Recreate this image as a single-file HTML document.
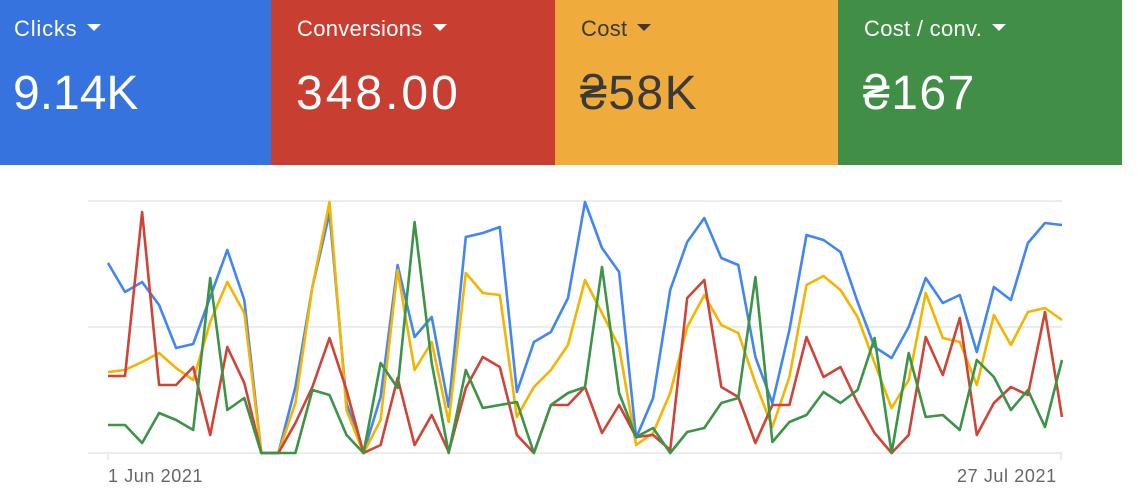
<!DOCTYPE html>
<html><head><meta charset="utf-8"><style>
body{margin:0;width:1143px;height:500px;background:#fff;overflow:hidden;font-family:"Liberation Sans",Arial,sans-serif;position:relative}
.t{position:absolute;top:0;height:165px;color:#fff}
.l{position:absolute;left:26px;top:16px;font-size:22px;letter-spacing:0.3px;white-space:nowrap}
.l:after{content:"";display:inline-block;margin-left:10px;border-left:7px solid transparent;border-right:7px solid transparent;border-top:7px solid currentColor;vertical-align:5px}
.v{position:absolute;left:25px;top:66px;font-size:48px;letter-spacing:1.5px;white-space:nowrap}
.ax{position:absolute;top:466px;font-size:18px;color:#666;letter-spacing:0.6px}
</style></head><body>
<div class="t" style="left:0;width:271px;background:#3773df"><div class="l" style="left:14px;letter-spacing:0.8px">Clicks</div><div class="v" style="left:13px;letter-spacing:0">9.14K</div></div>
<div class="t" style="left:271px;width:284px;background:#c83e31"><div class="l">Conversions</div><div class="v" style="letter-spacing:3px">348.00</div></div>
<div class="t" style="left:555px;width:283px;background:#efac3c;color:#3a3a3a"><div class="l">Cost</div><div class="v">₴58K</div></div>
<div class="t" style="left:838px;width:284px;background:#418f46"><div class="l">Cost / conv.</div><div class="v">₴167</div></div>
<svg width="1143" height="500" style="position:absolute;left:0;top:0">
<g stroke="#ececec" stroke-width="2"><line x1="88" y1="201" x2="1062" y2="201"/><line x1="88" y1="327" x2="1062" y2="327"/><line x1="88" y1="453" x2="1062" y2="453"/><line x1="108" y1="453" x2="108" y2="460"/><line x1="1061" y1="453" x2="1061" y2="460"/></g>
<g fill="none" stroke-width="2.6" stroke-linejoin="round" id="g"></g>
</svg>
<div class="ax" style="left:108px">1 Jun 2021</div>
<div class="ax" style="left:957px">27 Jul 2021</div>
<script>
var D=[
["#4285f4",[263,292,282,305,348,344,297,250,300,453,453,387,287,213,403,453,397,265,337,317,407,237,233,227,392,342,332,298,202,248,272,438,398,290,242,218,258,265,357,403,330,235,240,252,302,347,358,327,278,303,295,352,287,300,243,223,225]],
["#f4b400",[372,370,362,353,368,380,322,282,313,453,453,403,287,202,410,453,420,270,370,342,422,273,293,295,417,387,370,345,280,313,347,445,433,393,327,295,325,333,383,427,377,285,276,290,317,363,408,380,293,338,342,385,315,345,312,308,320]],
["#d04437",[376,376,212,385,385,367,435,347,383,453,453,423,387,338,390,453,445,378,445,415,452,388,357,367,435,453,405,405,387,433,405,437,435,450,298,280,387,397,443,405,405,337,377,367,403,433,453,435,337,375,318,435,403,387,395,312,417]],
["#3c9447",[425,425,443,413,420,430,278,410,398,453,453,453,390,395,435,453,363,388,222,363,453,370,408,405,402,453,405,393,387,267,393,437,428,453,432,428,403,398,277,442,422,415,392,403,390,338,453,353,417,415,430,360,377,410,390,427,360]]];
var g=document.getElementById('g'),h='';
D.forEach(function(s){var p=s[1].map(function(y,i){return (108+i*954/56).toFixed(1)+','+y}).join(' ');h+='<polyline stroke="'+s[0]+'" points="'+p+'"/>';});
g.innerHTML=h;
</script>
</body></html>
